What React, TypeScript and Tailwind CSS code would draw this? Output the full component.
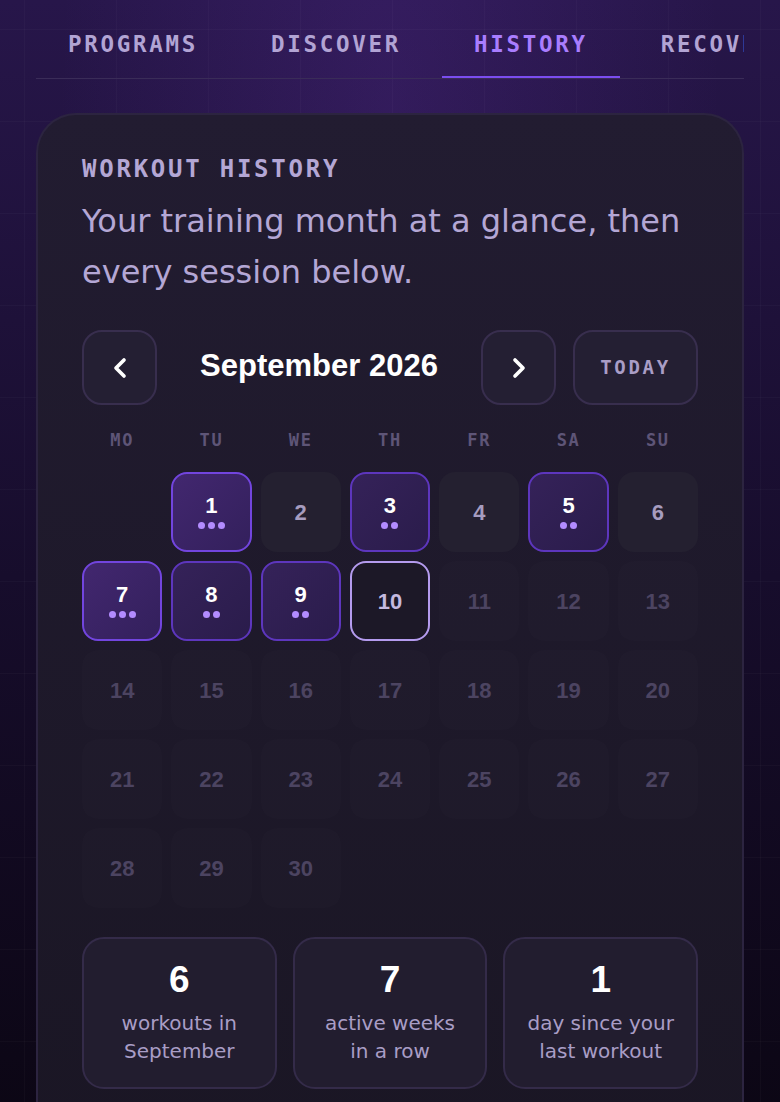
import { ChevronLeft, ChevronRight } from "lucide-react";

const mono = "font-['DejaVu_Sans_Mono',monospace]";
const sans = "font-['DejaVu_Sans',sans-serif]";
const num = "font-['Liberation_Sans',Arial,sans-serif]";

const tabs = ["PROGRAMS", "DISCOVER", "HISTORY", "RECOVERY"];
const weekdays = ["MO", "TU", "WE", "TH", "FR", "SA", "SU"];

// sessions logged per day of the month
const sessions: Record<number, number> = { 1: 3, 3: 2, 5: 2, 7: 3, 8: 2, 9: 2 };
const today = 10;
const firstWeekday = 1; // Sept 1 2026 is a Tuesday

const stats = [
  { value: "6", label: ["workouts in", "September"] },
  { value: "7", label: ["active weeks", "in a row"] },
  { value: "1", label: ["day since your", "last workout"] },
];

const DayCell = ({ day }: { day: number }) => {
  const count = sessions[day] ?? 0;
  if (count > 0) {
    return (
      <div
        className={`flex h-20 flex-col items-center justify-center rounded-2xl border-2 ${
          count > 2
            ? "border-[#7245de] bg-gradient-to-br from-[#42276f] to-[#33205c]"
            : "border-[#5d36bd] bg-gradient-to-br from-[#352259] to-[#2a1c4b]"
        }`}
      >
        <span className={`${num} -mt-[2px] text-[22px] font-bold leading-[24px] text-white`}>{day}</span>
        <div className="mt-[4px] flex gap-[3px]">
          {Array.from({ length: count }).map((_, i) => (
            <span key={i} className="h-[7px] w-[7px] rounded-full bg-[#b38cff]" />
          ))}
        </div>
      </div>
    );
  }
  if (day === today) {
    return (
      <div className="flex h-20 items-center justify-center rounded-2xl border-2 border-[#b49bee] bg-[#1c1827]">
        <span className={`${num} text-[22px] font-bold text-[#c4b9df]`}>{day}</span>
      </div>
    );
  }
  const past = day < today;
  return (
    <div className={`flex h-20 items-center justify-center rounded-2xl ${past ? "bg-[#242030]" : "bg-white/[0.012]"}`}>
      <span className={`${num} text-[22px] font-bold ${past ? "text-[#a69cbf]" : "text-[#4c4461]"}`}>{day}</span>
    </div>
  );
};

export default function App() {
  const blanks = Array.from({ length: firstWeekday });
  const days = Array.from({ length: 30 }, (_, i) => i + 1);

  return (
    <div className="min-h-[1102px] bg-gradient-to-b from-[#27164a] via-[#170d2c] to-[#0b0613]">
      <div className="min-h-[1102px] bg-[radial-gradient(ellipse_at_50%_10%,rgba(120,60,200,0.18),transparent_60%)]">
        <div className="min-h-[1102px] bg-[linear-gradient(rgba(255,255,255,0.025)_1px,transparent_1px),linear-gradient(90deg,rgba(255,255,255,0.025)_1px,transparent_1px)] bg-[size:92px_92px] bg-[position:24px_29px] px-9 pt-[27px]">
          {/* tab bar */}
          <nav className="flex gap-[9px] overflow-hidden border-b border-[#3a2c58]">
            {tabs.map((t) => (
              <div
                key={t}
                className={`-mb-px shrink-0 whitespace-nowrap border-b-[3px] px-8 pb-[15px] ${mono} text-[22.5px] font-bold leading-[34px] tracking-[0.12em] ${
                  t === "HISTORY" ? "border-[#7b4df0] text-[#a97dff]" : "border-transparent text-[#b2a4d4]"
                }`}
              >
                {t}
              </div>
            ))}
          </nav>

          {/* history card */}
          <section className="mt-[34px] rounded-t-[40px] border-2 border-b-0 border-[#2c2440] bg-gradient-to-b from-[#221c31] to-[#1a1624] px-[44px] pb-16 pt-[37px]">
            <h2 className={`${mono} text-[24px] font-bold leading-[34px] tracking-[0.115em] text-[#b4a7d5]`}>WORKOUT HISTORY</h2>
            <p className={`mt-[10px] ${sans} text-[32px] leading-[51px] text-[#b4a7d5]`}>
              Your training month at a glance, then every session below.
            </p>

            {/* month switcher */}
            <div className="mt-[32px] flex items-center">
              <button className="flex h-[75px] w-[75px] items-center justify-center rounded-[20px] border-2 border-[#382e4e] bg-[#241f33] text-white">
                <ChevronLeft size={32} strokeWidth={2.75} />
              </button>
              <h3 className={`-mt-[3px] flex-1 text-center ${num} text-[31px] font-bold text-white`}>September 2026</h3>
              <button className="flex h-[75px] w-[75px] items-center justify-center rounded-[20px] border-2 border-[#382e4e] bg-[#241f33] text-white">
                <ChevronRight size={32} strokeWidth={2.75} />
              </button>
              <button
                className={`ml-[17px] flex h-[75px] w-[125px] items-center justify-center rounded-[20px] border-2 border-[#382e4e] bg-[#241f33] ${mono} text-[19px] font-bold tracking-[0.14em] text-[#a99dc6]`}
              >
                TODAY
              </button>
            </div>

            {/* weekday labels */}
            <div className="mt-[25px] grid grid-cols-7 gap-[9px]">
              {weekdays.map((d) => (
                <span key={d} className={`text-center ${mono} text-[17px] font-bold leading-5 tracking-[0.1em] text-[#5e5577]`}>
                  {d}
                </span>
              ))}
            </div>

            {/* month grid */}
            <div className="mt-[22px] grid grid-cols-7 gap-[9px]">
              {blanks.map((_, i) => (
                <div key={`b${i}`} className="h-20" />
              ))}
              {days.map((d) => (
                <DayCell key={d} day={d} />
              ))}
            </div>

            {/* monthly summary */}
            <div className="mt-[29px] grid grid-cols-3 gap-4">
              {stats.map((s) => (
                <div key={s.value} className="rounded-[22px] border-2 border-[#342b49] bg-[#221d2f] pb-[22px] pt-[19px] text-center">
                  <div className={`${num} text-[37px] font-bold leading-[44px] text-white`}>{s.value}</div>
                  <div className={`mt-[7px] ${sans} text-[20px] leading-[28px] text-[#a99dc6]`}>
                    {s.label.map((l) => (
                      <div key={l}>{l}</div>
                    ))}
                  </div>
                </div>
              ))}
            </div>
          </section>
        </div>
      </div>
    </div>
  );
}
